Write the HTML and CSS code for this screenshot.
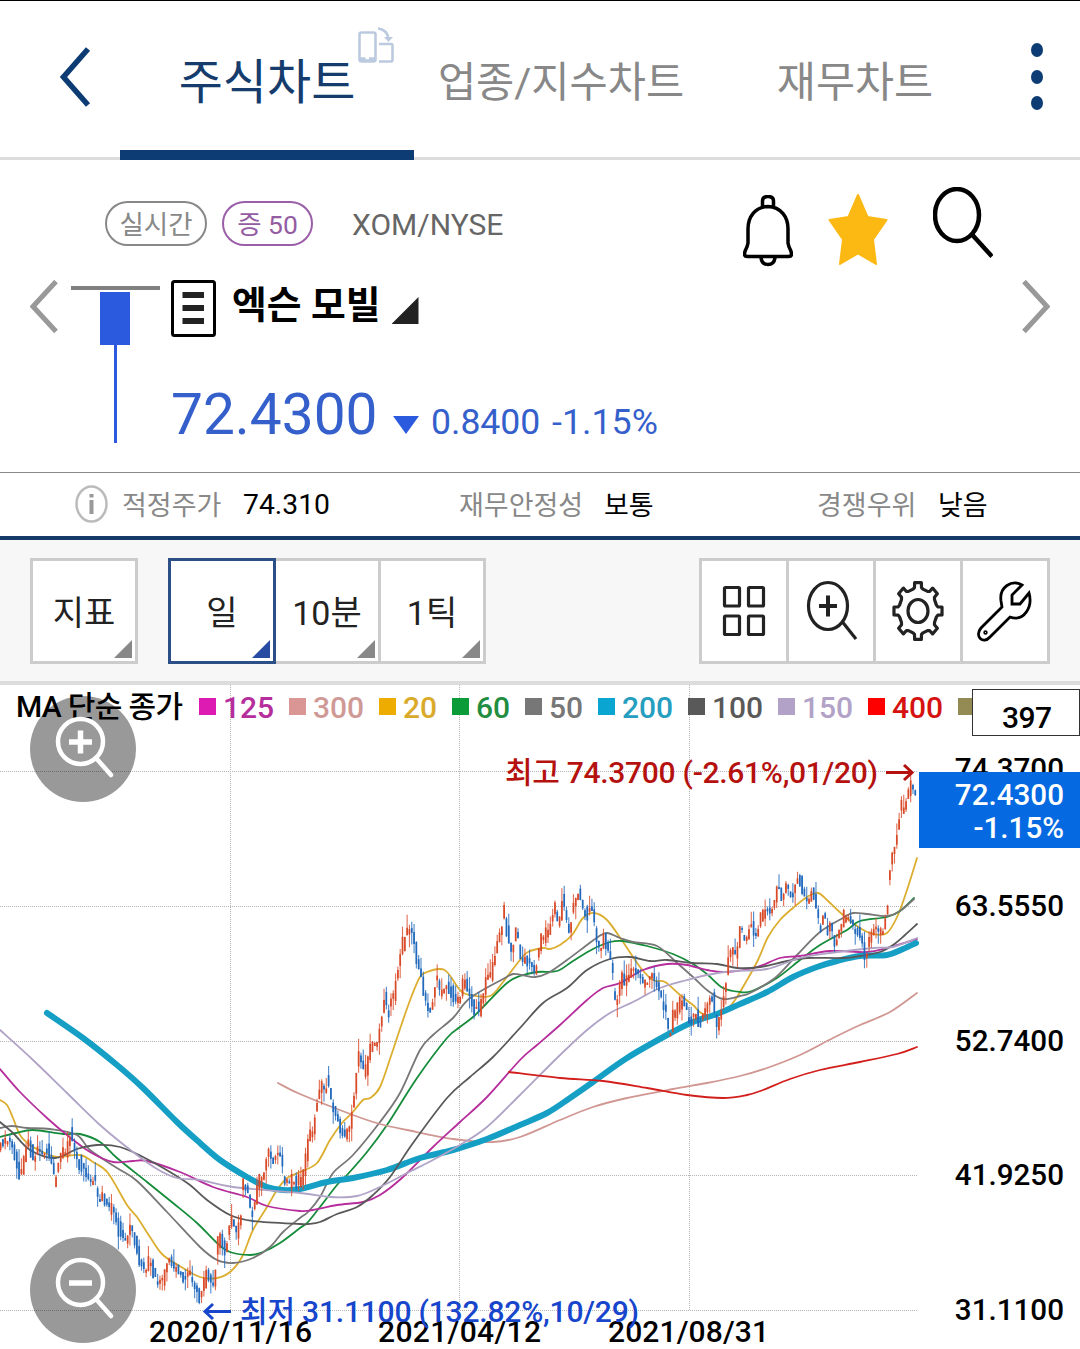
FILE: index.html
```html
<!DOCTYPE html>
<html lang="ko">
  <head>
    <meta charset="UTF-8" />
    <meta name="viewport" content="width=device-width, initial-scale=1.0" />
    <title>주식차트</title>
    <link rel="stylesheet" href="styles.css">
  </head>

  <body>
    <header class="header">
      <button class="back">
        <svg width="32" height="60" viewBox="0 0 32 60"><path d="M28 2 L3.500 30 L28 58" /></svg>
      </button>
      <nav class="tabs">
        <a class="tab active">주식차트
          <svg class="rotate" width="37" height="37" viewBox="0 0 37 37">
            <rect x="1.500" y="5.500" width="16" height="29" rx="2" />
            <path d="M1.500 31.500h6M11 31.500h6M1.500 33.500h16M21 17h12q1.500 0 1.500 2v13.500q0 2-1.500 2H21M20 1.500q9 1 10.500 10" />
            <path class="tip" d="M26 10h9l-4.500 5z" />
          </svg>
        </a>
        <a class="tab wide">업종/지수차트</a>
        <a class="tab">재무차트</a>
      </nav>
      <button class="more"><i></i><i></i><i></i></button>
    </header>

    <section class="quote">
      <div class="quote-top">
        <span class="pill">실시간</span>
        <span class="pill purple">증 50</span>
        <span class="code">XOM/NYSE</span>
        <svg class="bell" width="50" height="72" viewBox="0 0 50 72">
          <path d="M19.500 11.500V6q0-4.500 5.500-4.500T30.500 6v5.500M25 11.500C12 12 5 22 5 34v14C4 54 1.500 55 1.500 59q0 2.500 3 2.500h41q3 0 3-2.500c0-4-2.500-5-3.500-11V34c0-12-7-22-20-22.500zM18 63q1 6.500 7 6.500t7-6.500" />
        </svg>
        <svg class="star" width="60" height="72" viewBox="0 0 60 72">
          <path d="M30 1l9.500 22 19 3L45 45.500l3 24.500-18-10.500L12 70l3-24.500L1.500 26l19-3z" />
        </svg>
        <svg class="search" width="60" height="72" viewBox="0 0 60 72">
          <ellipse cx="24" cy="28" rx="22" ry="26" />
          <path d="M39 47.500l20 22" />
        </svg>
      </div>
      <div class="quote-main">
        <svg class="arrow" width="28" height="53" viewBox="0 0 28 53"><path d="M26 1.500L3 26.500 26 51.500" /></svg>
        <svg class="day-candle" width="89" height="157" viewBox="0 0 89 157">
          <rect class="base" x="0" y="0" width="89" height="4" />
          <rect x="29" y="6" width="30" height="53" />
          <rect x="43" y="59" width="3" height="98" />
        </svg>
        <div class="quote-body">
          <div class="name-row">
            <svg class="doc" width="45" height="57" viewBox="0 0 45 57">
              <rect x="1.500" y="1.500" width="42" height="54" rx="2" />
              <path d="M11.500 15h21.500M11.500 28h21.500M11.500 41h21.500" />
            </svg>
            <h1>엑슨 모빌</h1>
            <i class="corner"></i>
          </div>
          <div class="price-row">
            <strong>72.4300</strong>
            <i class="down"></i>
            <span class="diff">0.8400</span>
            <span class="rate">-1.15%</span>
          </div>
        </div>
        <svg class="arrow next" width="28" height="53" viewBox="0 0 28 53"><path d="M2 1.500L25 26.500 2 51.500" /></svg>
      </div>
    </section>

    <section class="info">
      <svg width="33" height="38" viewBox="0 0 33 38">
        <ellipse cx="16.500" cy="19" rx="15" ry="17.500" />
        <path d="M16.500 15v14M16.500 9v3.500" />
      </svg>
      <span class="label">적정주가</span><b class="first">74.310</b>
      <span class="label second">재무안정성</span><b>보통</b>
      <span class="label third">경쟁우위</span><b>낮음</b>
    </section>

    <section class="toolbar">
      <button class="btn">지표<i></i></button>
      <div class="periods">
        <button class="btn on">일<i></i></button>
        <button class="btn">10분<i></i></button>
        <button class="btn">1틱<i></i></button>
      </div>
      <div class="tools">
        <button>
          <svg width="84" height="100" viewBox="0 0 84 100">
            <rect x="22.500" y="26.500" width="15" height="18.500" rx="1" /><rect x="46.500" y="26.500" width="15" height="18.500" rx="1" />
            <rect x="22.500" y="55" width="15" height="18.500" rx="1" /><rect x="46.500" y="55" width="15" height="18.500" rx="1" />
          </svg>
        </button>
        <button>
          <svg width="84" height="100" viewBox="0 0 84 100">
            <ellipse cx="39" cy="45" rx="19.500" ry="23.500" />
            <path d="M53.500 61l13.500 17" />
            <path class="bold" d="M30 45h18M39 34.500v21" />
          </svg>
        </button>
        <button>
          <svg width="84" height="100" viewBox="0 0 84 100">
            <ellipse cx="42" cy="50" rx="10" ry="11.500" />
            <path id="gear" />
          </svg>
        </button>
        <button>
          <svg class="wrench" width="84" height="100" viewBox="0 0 84 100">
            <path d="M59 24C49 18 36 26 38 40L39 46 18 67C11 75 20 84 27 76L47 56C61 61 70 46 66 32L57 43H49V34z" />
            <circle cx="22.500" cy="71.500" r="0.800" />
          </svg>
        </button>
      </div>
    </section>

    <section class="chart">
      <svg id="chart" width="1080" height="664" viewBox="0 685 1080 664">
        <g id="grid"></g>
        <g id="lines"></g>
        <g id="candles"></g>
        <g id="legend"><text x="16" y="717" textLength="167">MA 단순 종가</text></g>

        <g class="high">
          <text x="505" y="783" textLength="373">최고 74.3700 (-2.61%,01/20)</text>
          <path d="M886 772.500h26M904 765l8 7.500-8 7.500" />
        </g>
        <g class="axis">
          <text x="1064" y="779">74.3700</text>
          <text x="1064" y="916">63.5550</text>
          <text x="1064" y="1051">52.7400</text>
          <text x="1064" y="1185">41.9250</text>
          <text x="1064" y="1320">31.1100</text>
        </g>
        <rect class="now-box" x="919" y="772" width="161" height="76" />
        <g class="axis now">
          <text x="1064" y="805">72.4300</text>
          <text x="1064" y="838">-1.15%</text>
        </g>
        <rect class="count-box" x="972.500" y="689.500" width="107" height="46" />
        <text x="1002" y="728" textLength="50">397</text>

        <text x="149" y="1342" textLength="163">2020/11/16</text>
        <text x="378" y="1342" textLength="163">2021/04/12</text>
        <text x="608" y="1342" textLength="161">2021/08/31</text>
        <g class="low">
          <text x="240" y="1322" textLength="399">최저 31.1100 (132.82%,10/29)</text>
          <path d="M231 1311.500h-26M213 1304l-8 7.500 8 7.500" />
        </g>
      </svg>
      <button class="zoom in">
        <svg width="106" height="106" viewBox="0 0 106 106">
          <circle cx="50.500" cy="45.500" r="22.500" />
          <path d="M66 62l15 17" />
          <path class="bold" d="M39 46h23M50.500 34.500v23" />
        </svg>
      </button>
      <button class="zoom out">
        <svg width="106" height="106" viewBox="0 0 106 106">
          <circle cx="50.500" cy="45.500" r="22.500" />
          <path d="M66 62l15 17" />
          <path class="bold" d="M39 46h23" />
        </svg>
      </button>
    </section>
    <script src="chart.js"></script>
  </body>
</html>
```

FILE: styles.css
```css
* {
  box-sizing: border-box;
}
body {
  margin: 0;
  width: 1080px;
  background: #fff;
  color: #000;
  font-family: Roboto, "Noto Sans CJK KR", sans-serif;
  overflow: hidden;
}
button {
  padding: 0;
  border: 0;
  background: none;
  font: inherit;
  color: inherit;
}
svg {
  display: block;
  flex: none;
  fill: none;
}

/* header */
.header {
  display: flex;
  height: 160px;
  border-top: 1px solid #000;
  border-bottom: 3px solid #dcdcdc;
}
.back {
  width: 120px;
  height: 152px;
  padding-left: 60px;
}
.back path {
  stroke: #0d3b73;
  stroke-width: 5.5;
}
.tabs {
  display: flex;
}
.tab {
  position: relative;
  width: 294px;
  height: 159px;
  padding-top: 2px;
  text-align: center;
  font-size: 42.5px;
  line-height: 159px;
  color: #888;
}
.tab.wide {
  font-size: 41.5px;
}
.tab.active {
  border-bottom: 10px solid #0d3b73;
  font-size: 48px;
  color: #153c6c;
}
.rotate {
  position: absolute;
  left: 238px;
  top: 26px;
}
.rotate rect,
.rotate path {
  stroke: #bccadf;
  stroke-width: 2.6;
}
.rotate .tip {
  fill: #bccadf;
  stroke: none;
}
.more {
  display: flex;
  flex-direction: column;
  align-items: center;
  gap: 12.5px;
  width: 70px;
  padding-top: 42px;
}
.more i {
  width: 12px;
  height: 14px;
  border-radius: 50%;
  background: #0d3b73;
}

/* quote */
.quote {
  height: 312px;
}
.quote-top {
  display: flex;
  align-items: flex-start;
  height: 120px;
  padding: 27px 0 0 105px;
}
.pill {
  width: 102px;
  height: 45px;
  margin: 14px 15px 0 0;
  border: 2px solid #888;
  border-radius: 23px;
  text-align: center;
  font-size: 26.5px;
  line-height: 44px;
  color: #888;
}
.pill.purple {
  width: 91px;
  border-color: #9a5fa8;
  color: #945ca2;
}
.code {
  width: 391px;
  margin: 14px 0 0 24px;
  font-size: 30px;
  line-height: 47px;
  color: #666;
}
.bell {
  margin-top: 8px;
  stroke: #000;
  stroke-width: 3.5;
}
.star {
  margin: 7px 0 0 35px;
  fill: #fcb813;
  stroke: #fcb813;
  stroke-width: 2;
  stroke-linejoin: round;
}
.search {
  margin-left: 45px;
  stroke: #000;
  stroke-width: 4.5;
}
.quote-main {
  display: flex;
}
.arrow {
  margin: 0 13px 0 30px;
  stroke: #999;
  stroke-width: 5;
}
.arrow.next {
  margin: 0 0 0 auto;
  margin-right: 30px;
}
.day-candle {
  margin-top: 6px;
  fill: #2c5adf;
}
.day-candle .base {
  fill: #808080;
}
.quote-body {
  margin-left: 11px;
}
.name-row {
  display: flex;
  height: 57px;
}
.doc rect {
  stroke: #000;
  stroke-width: 3;
}
.doc path {
  stroke: #222;
  stroke-width: 6;
}
.name-row h1 {
  margin: 0 11px 0 16px;
  font-size: 37.8px;
  font-weight: 700;
  line-height: 51px;
}
.corner {
  width: 27px;
  height: 27px;
  margin-top: 17px;
  background: #222;
  clip-path: polygon(100% 0, 100% 100%, 0 100%);
}
.price-row {
  display: flex;
  align-items: baseline;
  margin-top: 48px;
  line-height: 60px;
  color: #3560cc;
}
.price-row strong {
  width: 222px;
  font-size: 56.8px;
  font-weight: 400;
}
.down {
  width: 26px;
  height: 18px;
  background: #2c5adf;
  clip-path: polygon(0 0, 100% 0, 50% 100%);
}
.diff {
  width: 110px;
  margin: 0 11px 0 12px;
  font-size: 35.6px;
}
.rate {
  font-size: 35.8px;
}

/* info */
.info {
  display: flex;
  align-items: center;
  height: 68px;
  padding: 0 0 2px 75px;
  border-top: 1px solid #888;
  border-bottom: 4px solid #163a66;
  font-size: 27px;
  white-space: nowrap;
}
.info ellipse {
  stroke: #bbb;
  stroke-width: 2.5;
}
.info path {
  stroke: #999;
  stroke-width: 4;
}
.label {
  width: 121px;
  margin-left: 14px;
  color: #888;
}
.label.second {
  width: 145px;
  margin-left: 115px;
}
.label.third {
  margin-left: 159px;
}
.info b {
  width: 54px;
  font-weight: 400;
}
.info b.first {
  width: 101px;
  padding-top: 2px;
  font-size: 28.3px;
}

/* toolbar */
.toolbar {
  display: flex;
  height: 145px;
  padding: 18px 30px 0;
  background: #f7f7f7;
  border-bottom: 4px solid #dcdcdc;
}
.btn {
  position: relative;
  width: 108px;
  height: 106px;
  padding-bottom: 2px;
  border: 3px solid #ccc;
  background: #fff;
  font-size: 34px;
  color: #222;
}
.btn i {
  position: absolute;
  right: 3px;
  bottom: 3px;
  width: 18px;
  height: 18px;
  background: #888;
  clip-path: polygon(100% 0, 100% 100%, 0 100%);
}
.periods {
  display: flex;
  margin-left: 30px;
}
.periods .btn + .btn {
  margin-left: -3px;
}
.btn.on {
  z-index: 1;
  border-color: #2c4f88;
}
.btn.on i {
  background: #274ba0;
}
.tools {
  display: flex;
  gap: 3px;
  width: 351px;
  height: 106px;
  padding: 3px;
  margin-left: auto;
  background: #ccc;
}
.tools button {
  width: 84px;
  background: #fff;
}
.tools svg {
  stroke: #222;
  stroke-width: 3.2;
}
.tools .bold {
  stroke-width: 4;
}
.tools .wrench {
  stroke: #000;
  stroke-width: 2.8;
}

/* chart */
.chart {
  position: relative;
  height: 664px;
}
.chart text {
  font-size: 30px;
  font-weight: 500;
  fill: #000;
}
.chart .axis text {
  font-size: 29.6px;
  text-anchor: end;
}
#grid {
  stroke: #b5b5b5;
  stroke-width: 1;
  stroke-dasharray: 1 1;
}
#lines {
  stroke-linejoin: round;
  stroke-linecap: round;
}
.chart .high text {
  fill: #b5120f;
}
.high path {
  stroke: #b5120f;
  stroke-width: 3;
}
.chart .low text {
  fill: #1746cc;
}
.low path {
  stroke: #1746cc;
  stroke-width: 3;
}
.now-box {
  fill: #056ae1;
}
.chart .now text {
  fill: #fff;
}
.count-box {
  fill: #fff;
  stroke: #333;
}
.zoom {
  position: absolute;
  left: 30px;
  width: 106px;
  height: 106px;
  border-radius: 50%;
  background: rgba(0, 0, 0, 0.4);
}
.zoom.in {
  top: 11px;
}
.zoom.out {
  top: 552px;
}
.zoom svg {
  stroke: #fff;
  stroke-width: 4.5;
  stroke-linecap: round;
}
.zoom .bold {
  stroke-width: 5.5;
  stroke-linecap: butt;
}
```

FILE: chart.js
```js
const $grid = document.getElementById('grid');
const $lines = document.getElementById('lines');
const $candles = document.getElementById('candles');
const $legend = document.getElementById('legend');

const legend = [
  [199, '125', '#dd1bb3', '#b62d9c'],
  [289, '300', '#d99694', '#cf9a96'],
  [379, '20', '#efac00', '#d9aa2b'],
  [452, '60', '#0b9b38', '#218d40'],
  [525, '50', '#777', '#777'],
  [598, '200', '#0aa6d1', '#259ebf'],
  [688, '100', '#595959', '#595959'],
  [778, '150', '#b3a2c7', '#b3a2c7'],
  [868, '400', '#f00', '#d5120f'],
  [958, '', '#948b54', '#948b54'],
];

// 이동평균선
const lines = [
  { color: '#dcae30', width: 1.8, points: '0,1100 7,1105 13,1118 20,1135 30,1145 43,1152 57,1157 80,1155 93,1162 108,1173 127,1205 137,1217 150,1237 163,1255 183,1268 200,1277 217,1278 230,1272 242,1257 253,1230 267,1207 277,1190 287,1178 300,1172 317,1163 330,1140 342,1123 352,1113 363,1100 370,1098 380,1087 392,1053 402,1023 412,995 420,977 427,972 440,969 448,973 460,990 470,995 490,996 503,982 520,960 528,952 543,948 550,949 560,945 572,935 583,918 594,913 607,920 623,942 640,967 653,980 665,982 680,995 693,1005 703,1014 722,1014 735,1000 747,980 758,960 768,937 780,920 793,908 807,897 818,893 828,901 843,915 860,928 873,934 887,933 898,915 908,887 917,858' },
  { color: '#168c3b', width: 1.8, points: '0,1137 16,1133 33,1130 63,1134 80,1134 100,1142 117,1158 147,1182 173,1203 197,1223 217,1243 230,1252 250,1255 263,1252 280,1243 300,1228 308,1222 320,1207 337,1185 347,1175 367,1152 387,1125 417,1078 447,1038 460,1027 473,1017 487,1003 507,983 520,976 537,972 557,971 573,961 593,949 610,942 623,941 647,946 673,954 693,964 708,975 723,988 740,992 752,991 777,978 800,960 820,945 847,930 860,921 887,917 900,911 914,898' },
  { color: '#777', width: 1.8, points: '0,1128 12,1126 27,1128 50,1129 77,1135 90,1150 117,1168 137,1181 167,1212 200,1247 217,1260 233,1263 253,1258 270,1247 283,1232 300,1218 308,1212 320,1197 333,1173 353,1155 380,1122 400,1093 420,1050 433,1035 453,1018 470,998 503,979 513,974 522,975 535,977 548,973 567,960 587,945 598,937 607,933 620,938 633,942 657,946 677,963 693,977 707,990 723,999 740,996 750,993 775,978 797,955 820,932 843,918 853,913 867,914 887,916 900,911 914,899' },
  { color: '#d09793', width: 1.8, points: '278,1083 300,1094 353,1115 380,1124 407,1130 453,1139 493,1142 520,1137 560,1120 593,1107 627,1098 673,1089 707,1083 740,1076 767,1068 800,1055 833,1038 860,1025 890,1012 917,993' },
  { color: '#b62d9c', width: 1.8, points: '0,1069 20,1092 47,1118 67,1135 90,1152 113,1162 133,1161 147,1161 180,1172 213,1187 247,1197 267,1206 300,1211 313,1210 337,1205 363,1202 380,1195 403,1177 433,1147 460,1122 487,1097 520,1060 537,1045 560,1025 587,1000 603,988 620,983 643,970 667,964 687,965 707,970 727,972 757,967 780,958 800,956 830,951 867,952 887,948 917,939' },
  { color: '#169fc5', width: 6, points: '47,1013 83,1038 117,1065 143,1088 177,1122 200,1143 220,1160 247,1177 267,1187 283,1190 300,1189 327,1182 353,1178 387,1170 420,1158 453,1150 487,1139 520,1125 547,1113 570,1098 593,1082 627,1058 667,1035 693,1022 717,1014 740,1004 767,992 793,977 817,967 837,961 860,956 887,955 903,949 916,943' },
  { color: '#595959', width: 1.8, points: '0,1122 13,1133 30,1150 55,1158 77,1149 97,1145 120,1147 143,1157 170,1172 190,1185 207,1200 230,1215 253,1221 300,1224 308,1224 320,1222 337,1214 357,1207 373,1195 390,1177 413,1143 447,1098 470,1077 493,1057 520,1028 543,1003 567,988 587,970 610,959 630,957 650,961 667,960 693,963 717,964 737,968 760,967 787,961 807,958 843,958 860,956 880,952 893,945 905,935 917,924' },
  { color: '#b0a3c6', width: 1.8, points: '0,1030 33,1060 67,1093 100,1125 133,1152 157,1169 177,1178 200,1180 233,1187 300,1193 330,1197 357,1196 380,1187 407,1173 433,1160 460,1145 487,1127 520,1095 557,1058 587,1030 610,1013 633,1002 660,988 687,980 707,975 733,971 767,969 800,958 830,953 873,948 893,947 917,938' },
  { color: '#d21f1c', width: 1.8, points: '509,1072 560,1078 603,1081 647,1088 687,1095 723,1098 747,1095 763,1090 790,1079 820,1070 860,1062 897,1054 917,1047' },
];

// 주가 흐름 (x,y)
const flow = '0,1146 7,1142 10,1140 15,1155 20,1175 25,1163 28,1140 35,1160 38,1147 43,1152 50,1153 56,1180 62,1153 68,1150 72,1132 78,1163 83,1167 92,1183 95,1177 100,1202 103,1193 108,1207 113,1208 117,1222 122,1233 127,1240 132,1227 137,1247 142,1263 146,1272 149,1260 153,1267 158,1283 162,1277 165,1277 169,1258 173,1267 180,1270 185,1278 191,1273 195,1287 201,1299 203,1287 208,1273 215,1287 218,1240 222,1238 226,1253 230,1227 233,1217 237,1233 241,1220 243,1183 247,1188 252,1213 256,1200 260,1180 263,1183 267,1160 270,1150 274,1163 278,1152 283,1162 285,1183 302,1180 306,1163 310,1137 314,1130 317,1107 322,1083 325,1093 329,1080 333,1107 338,1117 341,1130 346,1137 352,1120 354,1100 357,1078 359,1053 362,1063 367,1073 371,1047 378,1043 382,1020 386,997 389,1017 392,993 395,995 398,973 402,947 405,943 408,930 412,928 415,940 417,960 422,977 425,997 429,1010 433,1003 437,980 442,993 447,987 455,997 460,1002 463,983 468,987 472,1003 475,1010 482,1005 487,980 492,973 495,960 498,940 502,930 504,912 508,933 512,953 517,930 522,960 528,960 533,967 537,968 540,943 548,933 552,923 555,910 560,920 564,897 567,917 570,937 573,910 577,897 581,893 584,910 588,915 591,903 595,920 597,937 600,950 605,937 609,947 612,963 614,980 616,1007 618,1000 621,980 627,982 632,970 637,970 642,980 647,983 653,975 659,987 663,1003 667,1013 670,1040 673,1017 678,1007 685,1000 690,1023 695,1013 701,1023 707,1010 713,995 718,1027 722,1010 727,983 729,957 733,952 737,955 739,940 742,927 746,943 752,923 757,938 762,915 768,910 772,913 775,900 778,887 783,897 787,883 792,898 795,890 799,877 803,890 808,902 813,890 817,903 820,933 825,913 828,937 831,920 835,943 838,940 842,923 847,917 852,917 855,930 859,933 863,940 866,962 868,943 873,933 877,928 883,935 887,917 889,885 891,863 894,850 897,840 901,807 905,813 907,797 912,783 916,793'
  .split(' ')
  .map((p) => p.split(',').map(Number));

function priceAt(x) {
  const i = Math.max(1, flow.findIndex((p) => p[0] >= x));
  const [x0, y0] = flow[i - 1];
  const [x1, y1] = flow[i];
  return y0 + ((y1 - y0) * (x - x0)) / (x1 - x0);
}

function noise(i) {
  const n = Math.sin(i * 12.9898) * 43758.5453;
  return n - Math.floor(n);
}

function smooth(points) {
  const p = points.split(' ').map((s) => s.split(',').map(Number));
  let d = `M${p[0]}`;
  for (let i = 0; i < p.length - 1; i++) {
    const a = p[i - 1] || p[i];
    const b = p[i];
    const c = p[i + 1];
    const e = p[i + 2] || c;
    d += `C${b[0] + (c[0] - a[0]) / 6} ${b[1] + (c[1] - a[1]) / 6} ${c[0] - (e[0] - b[0]) / 6} ${c[1] - (e[1] - b[1]) / 6} ${c[0]} ${c[1]}`;
  }
  return d;
}

function drawGrid() {
  let html = '';
  [771.5, 906.5, 1041.5, 1175.5, 1310.5].forEach((y) => {
    html += `<path d="M0 ${y}H918" />`;
  });
  [230.5, 459.5, 689.5].forEach((x) => {
    html += `<path d="M${x} 685V1310" />`;
  });
  $grid.innerHTML = html;
}

function drawLines() {
  $lines.innerHTML = lines
    .map((l) => `<path d="${smooth(l.points)}" stroke="${l.color}" stroke-width="${l.width}" />`)
    .join('');
}

function drawCandles() {
  const count = 397;
  const step = 917 / count;
  let html = '';
  for (let i = 0; i < count; i++) {
    const x = i * step + 0.6;
    const y = priceAt(Math.min(x, 916)) + (noise(i + 77) - 0.5) * 5;
    const move = priceAt(Math.min(x + step, 916)) - priceAt(Math.max(x - step, 0));
    const up = move + (noise(i) - 0.5) * 14 < 0;
    const color = up ? '#d94a28' : '#2069bd';
    const body = 1.5 + noise(i + 500) ** 2 * 14 + Math.min(Math.abs(move) * 0.3, 7);
    const top = body / 2 + noise(i + 900) ** 2 * 13;
    const bottom = body / 2 + noise(i + 1300) ** 2 * 13;
    const high = Math.max(y - top, 773);
    const low = Math.min(y + bottom, 1308);
    html += `<path d="M${x} ${high}V${low}" stroke="${color}" stroke-width="1.1" opacity="0.8" />`;
    html += `<path d="M${x} ${Math.max(y - body / 2, 775)}V${Math.min(y + body / 2, 1307)}" stroke="${color}" stroke-width="1.7" />`;
  }
  $candles.innerHTML = html;
}

function drawLegend() {
  legend.forEach(([x, label, box, color]) => {
    $legend.innerHTML += `<rect x="${x}" y="698" width="17" height="17" fill="${box}" />
      <text x="${x + 24}" y="718" style="fill: ${color}">${label}</text>`;
  });
}

// 톱니바퀴 아이콘
function drawGear() {
  const points = [];
  for (let i = 0; i < 8; i++) {
    [[-15, 0.78], [-10, 0.82], [-8, 0.99], [8, 0.99], [10, 0.82], [15, 0.78]].forEach(([deg, r]) => {
      const a = ((i * 45 + deg) * Math.PI) / 180;
      points.push(`${42 + Math.sin(a) * 24.5 * r} ${50 - Math.cos(a) * 29 * r}`);
    });
  }
  const $gear = document.getElementById('gear');
  $gear.setAttribute('d', `M${points.join('L')}Z`);
  $gear.setAttribute('stroke-linejoin', 'round');
}

drawGrid();
drawLines();
drawCandles();
drawLegend();
drawGear();
```
